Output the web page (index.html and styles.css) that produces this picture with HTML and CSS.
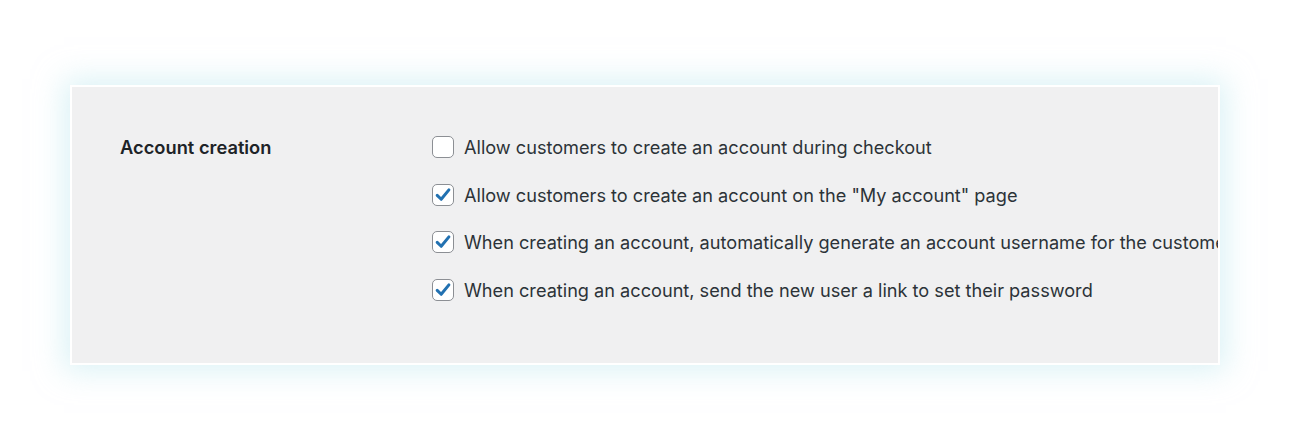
FILE: index.html
```html
<!DOCTYPE html>
<html>
<head>
<meta charset="utf-8">
<link rel="stylesheet" href="styles.css">
</head>
<body>
<div class="stage">
  <div class="panel">
    <div class="row">
      <div class="label">Account creation</div>
      <div class="options">
        <label class="opt"><span class="box"></span><span class="text">Allow customers to create an account during checkout</span></label>
        <label class="opt"><span class="box checked"><svg viewBox="0 0 20 20" width="20" height="20"><path d="M4.2 10.4 L8.2 14.3 L15.9 4.9" fill="none" stroke="#2271b1" stroke-width="3" stroke-linecap="round" stroke-linejoin="round"/></svg></span><span class="text">Allow customers to create an account on the "My account" page</span></label>
        <label class="opt"><span class="box checked"><svg viewBox="0 0 20 20" width="20" height="20"><path d="M4.2 10.4 L8.2 14.3 L15.9 4.9" fill="none" stroke="#2271b1" stroke-width="3" stroke-linecap="round" stroke-linejoin="round"/></svg></span><span class="text">When creating an account, automatically generate an account username for the customer based on their name, surname or email</span></label>
        <label class="opt"><span class="box checked"><svg viewBox="0 0 20 20" width="20" height="20"><path d="M4.2 10.4 L8.2 14.3 L15.9 4.9" fill="none" stroke="#2271b1" stroke-width="3" stroke-linecap="round" stroke-linejoin="round"/></svg></span><span class="text">When creating an account, send the new user a link to set their password</span></label>
      </div>
    </div>
  </div>
</div>
</body>
</html>
```
FILE: styles.css
```css
html, body {
  margin: 0;
  padding: 0;
  background: #ffffff;
}
body {
  font-family: Inter, "Noto Sans", "Liberation Sans", sans-serif;
  color: #1d2327;
}
.stage {
  padding: 85px 0 0 70px;
  height: 435px;
  box-sizing: border-box;
}
.panel {
  width: 1150px;
  height: 280px;
  box-sizing: border-box;
  border: 2px solid #ffffff;
  background: #f0f0f1;
  overflow: hidden;
  box-shadow: 0 0 28px 6px rgba(190, 232, 238, 0.55);
}
.row {
  display: flex;
  padding: 47px 0 0 48px;
}
.label {
  width: 312px;
  flex: none;
  font-size: 18.3px;
  font-weight: 600;
  line-height: 26px;
  color: #1d2327;
}
.options {
  display: flex;
  flex-direction: column;
  gap: 21.5px;
  white-space: nowrap;
}
.opt {
  display: flex;
  align-items: center;
  height: 26px;
}
.box {
  width: 22px;
  height: 22px;
  box-sizing: border-box;
  border: 1.4px solid #8c8f94;
  border-radius: 5px;
  background: #ffffff;
  display: flex;
  align-items: center;
  justify-content: center;
  flex: none;
  margin-right: 10px;
}
.text {
  font-size: 18.15px;
  line-height: 26px;
  color: #2c3338;
}
```
